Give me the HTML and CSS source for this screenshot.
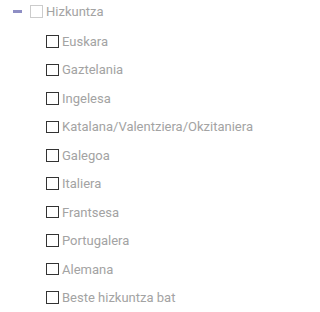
FILE: index.html
```html
<!DOCTYPE html>
<html>
<head>
<meta charset="utf-8">
<link rel="stylesheet" href="styles.css">
</head>
<body>
<div class="tree">
  <div class="node parent">
    <span class="toggle"></span>
    <span class="box box-light"></span>
    <span class="label">Hizkuntza</span>
  </div>
  <ul class="children">
    <li class="node"><span class="box"></span><span class="label">Euskara</span></li>
    <li class="node"><span class="box"></span><span class="label">Gaztelania</span></li>
    <li class="node"><span class="box"></span><span class="label">Ingelesa</span></li>
    <li class="node"><span class="box"></span><span class="label">Katalana/Valentziera/Okzitaniera</span></li>
    <li class="node"><span class="box"></span><span class="label">Galegoa</span></li>
    <li class="node"><span class="box"></span><span class="label">Italiera</span></li>
    <li class="node"><span class="box"></span><span class="label">Frantsesa</span></li>
    <li class="node"><span class="box"></span><span class="label">Portugalera</span></li>
    <li class="node"><span class="box"></span><span class="label">Alemana</span></li>
    <li class="node"><span class="box"></span><span class="label">Beste hizkuntza bat</span></li>
  </ul>
</div>
</body>
</html>
```
FILE: styles.css
```css
html, body {
  margin: 0;
  padding: 0;
  background: #ffffff;
}
body {
  font-family: Roboto, "Liberation Sans", sans-serif;
  font-size: 13px;
  color: #a3a3a3;
}
.tree {
  padding-left: 13px;
}
.node {
  display: flex;
  align-items: center;
}
.parent {
  height: 22.6px;
}
.toggle {
  width: 9px;
  height: 3px;
  background: #8e8ec4;
  margin-right: 8px;
  margin-top: 1px;
}
.box {
  box-sizing: border-box;
  width: 12.5px;
  height: 12.5px;
  border: 1px solid #333333;
  background: #ffffff;
  flex: none;
}
.box-light {
  border-color: #cccccc;
}
.label {
  margin-left: 3.5px;
  line-height: 1;
}
.children {
  list-style: none;
  margin: 4.7px 0 0 0;
  padding: 0 0 0 33px;
}
.children .node {
  height: 28.44px;
}
```
